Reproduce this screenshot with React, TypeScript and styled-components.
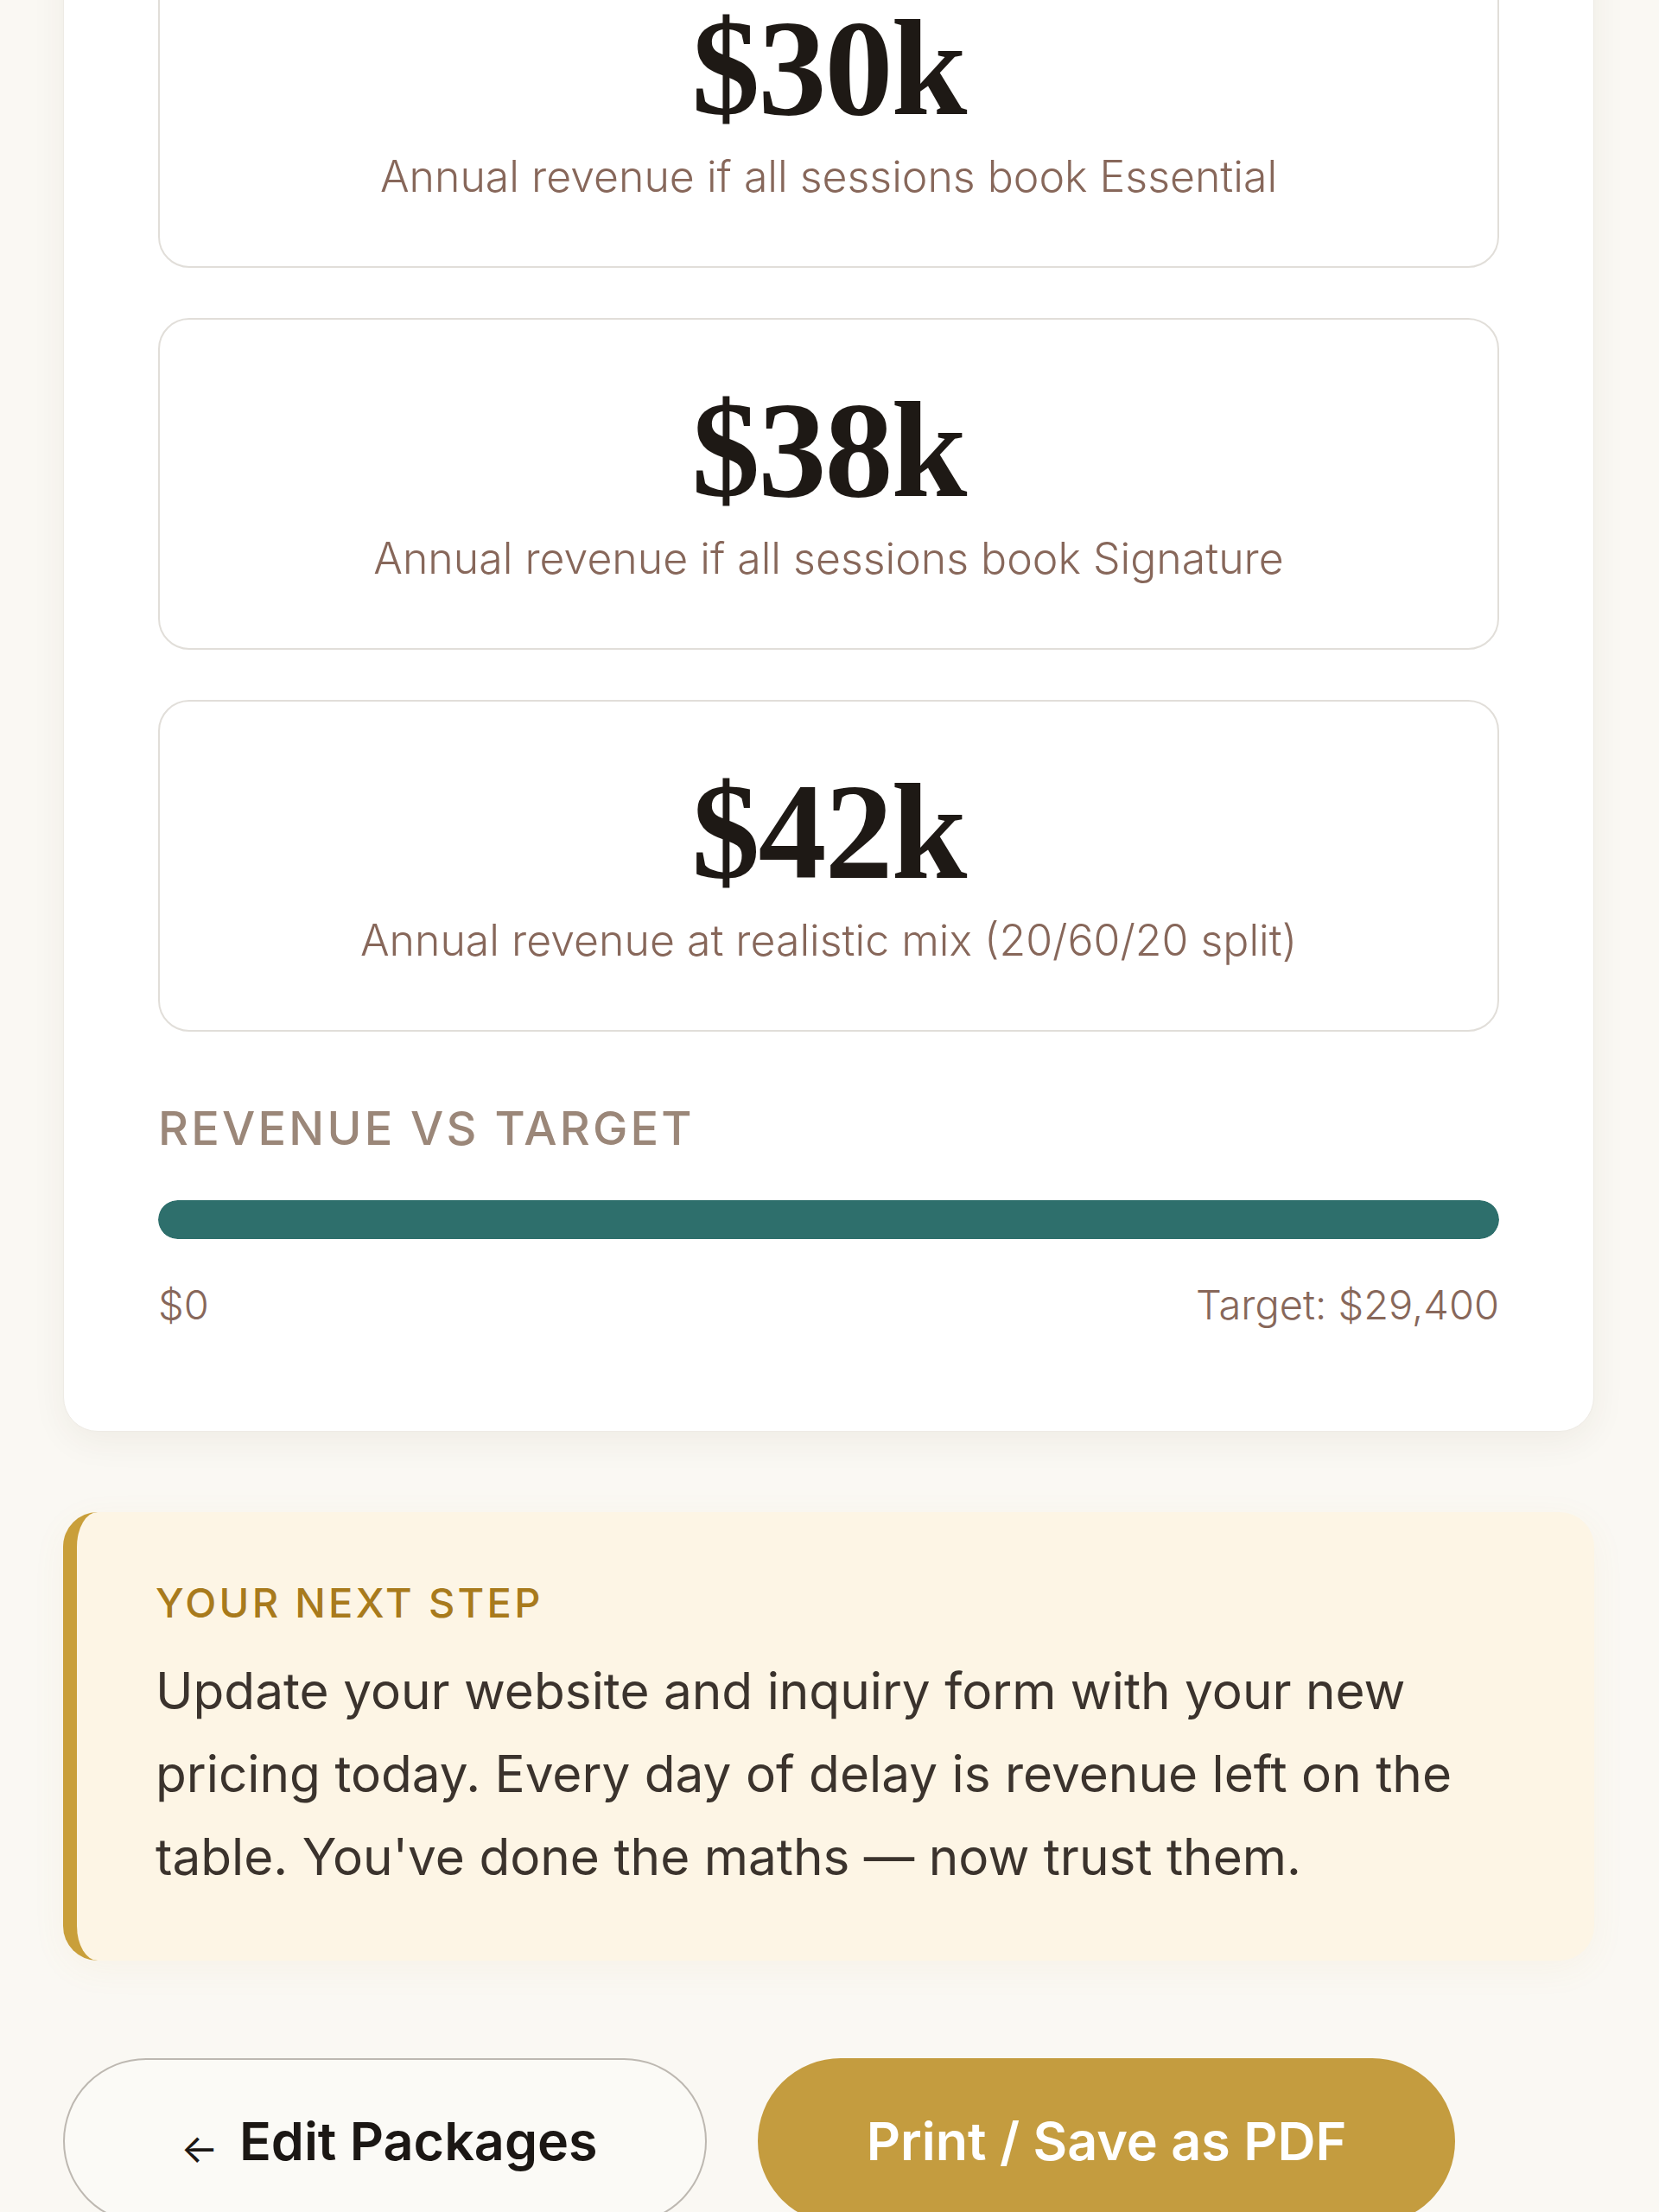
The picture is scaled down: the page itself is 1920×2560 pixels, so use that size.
import styled, { createGlobalStyle } from 'styled-components';

const GlobalStyle = createGlobalStyle`
  body {
    margin: 0;
    background: #faf8f3;
    font-family: Inter, 'Noto Sans', sans-serif;
    -webkit-font-smoothing: antialiased;
  }
`;

const Page = styled.div`
  padding: 0 75px 120px 73px;
  margin-top: -185px;
`;

const ResultsCard = styled.section`
  background: #ffffff;
  border-radius: 40px;
  border: 1px solid #eeebe5;
  box-shadow: 0 12px 40px rgba(60, 45, 20, 0.06);
  padding: 110px 109px 118px;
`;

const StatList = styled.div`
  display: flex;
  flex-direction: column;
  gap: 58px;
`;

const StatCard = styled.div`
  height: 384px;
  box-sizing: border-box;
  border: 2px solid #e1ded9;
  border-radius: 36px;
  display: flex;
  flex-direction: column;
  align-items: center;
  justify-content: center;
`;

const StatValue = styled.div`
  font-family: 'Liberation Serif', 'DejaVu Serif', serif;
  font-weight: 700;
  font-size: 158px;
  line-height: 1;
  color: #1e1915;
  letter-spacing: -2px;
`;

const StatLabel = styled.div`
  margin-top: 14px;
  font-size: 50px;
  font-weight: 300;
  color: #87675a;
  line-height: 1.3;
`;

const SectionLabel = styled.div`
  margin-top: 80px;
  font-size: 54px;
  font-weight: 500;
  letter-spacing: 0.06em;
  text-transform: uppercase;
  color: #9b8779;
  line-height: 1.2;
`;

const Track = styled.div`
  margin-top: 50px;
  height: 45px;
  border-radius: 23px;
  background: #eef0ee;
  overflow: hidden;
`;

const Fill = styled.div`
  height: 100%;
  border-radius: 23px;
  background: #2e6f6c;
`;

const ScaleRow = styled.div`
  margin-top: 48px;
  display: flex;
  justify-content: space-between;
  font-size: 47px;
  font-weight: 300;
  color: #87675a;
  line-height: 1.2;
`;

const NextStep = styled.aside`
  margin-top: 93px;
  background: #fdf5e5;
  border-left: 16px solid #c99f3a;
  border-radius: 40px;
  padding: 74px 90px 72px 91px;
  box-shadow: 0 10px 40px rgba(200, 160, 60, 0.06);
`;

const NextStepTitle = styled.div`
  font-size: 47px;
  font-weight: 500;
  letter-spacing: 0.07em;
  text-transform: uppercase;
  color: #a87a1c;
  line-height: 1.3;
`;

const NextStepText = styled.p`
  margin: 24px 0 0;
  font-size: 58.5px;
  font-weight: 400;
  line-height: 96px;
  color: #3b332d;
`;

const Actions = styled.div`
  margin-top: 113px;
  display: flex;
  gap: 59px;
`;

const Button = styled.button<{ $primary?: boolean }>`
  height: 192px;
  padding: 0 124px 0 ${({ $primary }) => ($primary ? '124px' : '134px')};
  border-radius: 999px;
  font-family: Inter, sans-serif;
  font-size: 61px;
  font-weight: 600;
  display: flex;
  align-items: center;
  gap: 24px;
  cursor: pointer;
  border: 2px solid ${({ $primary }) => ($primary ? '#c49c3f' : '#bdb8b1')};
  background: ${({ $primary }) => ($primary ? '#c49c3f' : '#fbfaf6')};
  color: ${({ $primary }) => ($primary ? '#ffffff' : '#1b1714')};
`;

const Arrow = styled.span`
  font-size: 46px;
  font-weight: 400;
  position: relative;
  top: 8px;
`;

const stats = [
  { value: '$30k', label: 'Annual revenue if all sessions book Essential' },
  { value: '$38k', label: 'Annual revenue if all sessions book Signature' },
  { value: '$42k', label: 'Annual revenue at realistic mix (20/60/20 split)' },
];

export default function App() {
  return (
    <>
      <GlobalStyle />
      <Page>
        <ResultsCard>
          <StatList>
            {stats.map((stat) => (
              <StatCard key={stat.value}>
                <StatValue>{stat.value}</StatValue>
                <StatLabel>{stat.label}</StatLabel>
              </StatCard>
            ))}
          </StatList>

          <SectionLabel>Revenue vs Target</SectionLabel>
          <Track>
            <Fill style={{ width: '100%' }} />
          </Track>
          <ScaleRow>
            <span>$0</span>
            <span>Target: $29,400</span>
          </ScaleRow>
        </ResultsCard>

        <NextStep>
          <NextStepTitle>Your next step</NextStepTitle>
          <NextStepText>
            Update your website and inquiry form with your new pricing today.
            Every day of delay is revenue left on the table. You've done the
            maths — now trust them.
          </NextStepText>
        </NextStep>

        <Actions>
          <Button>
            <Arrow>←</Arrow>
            Edit Packages
          </Button>
          <Button $primary>Print / Save as PDF</Button>
        </Actions>
      </Page>
    </>
  );
}
